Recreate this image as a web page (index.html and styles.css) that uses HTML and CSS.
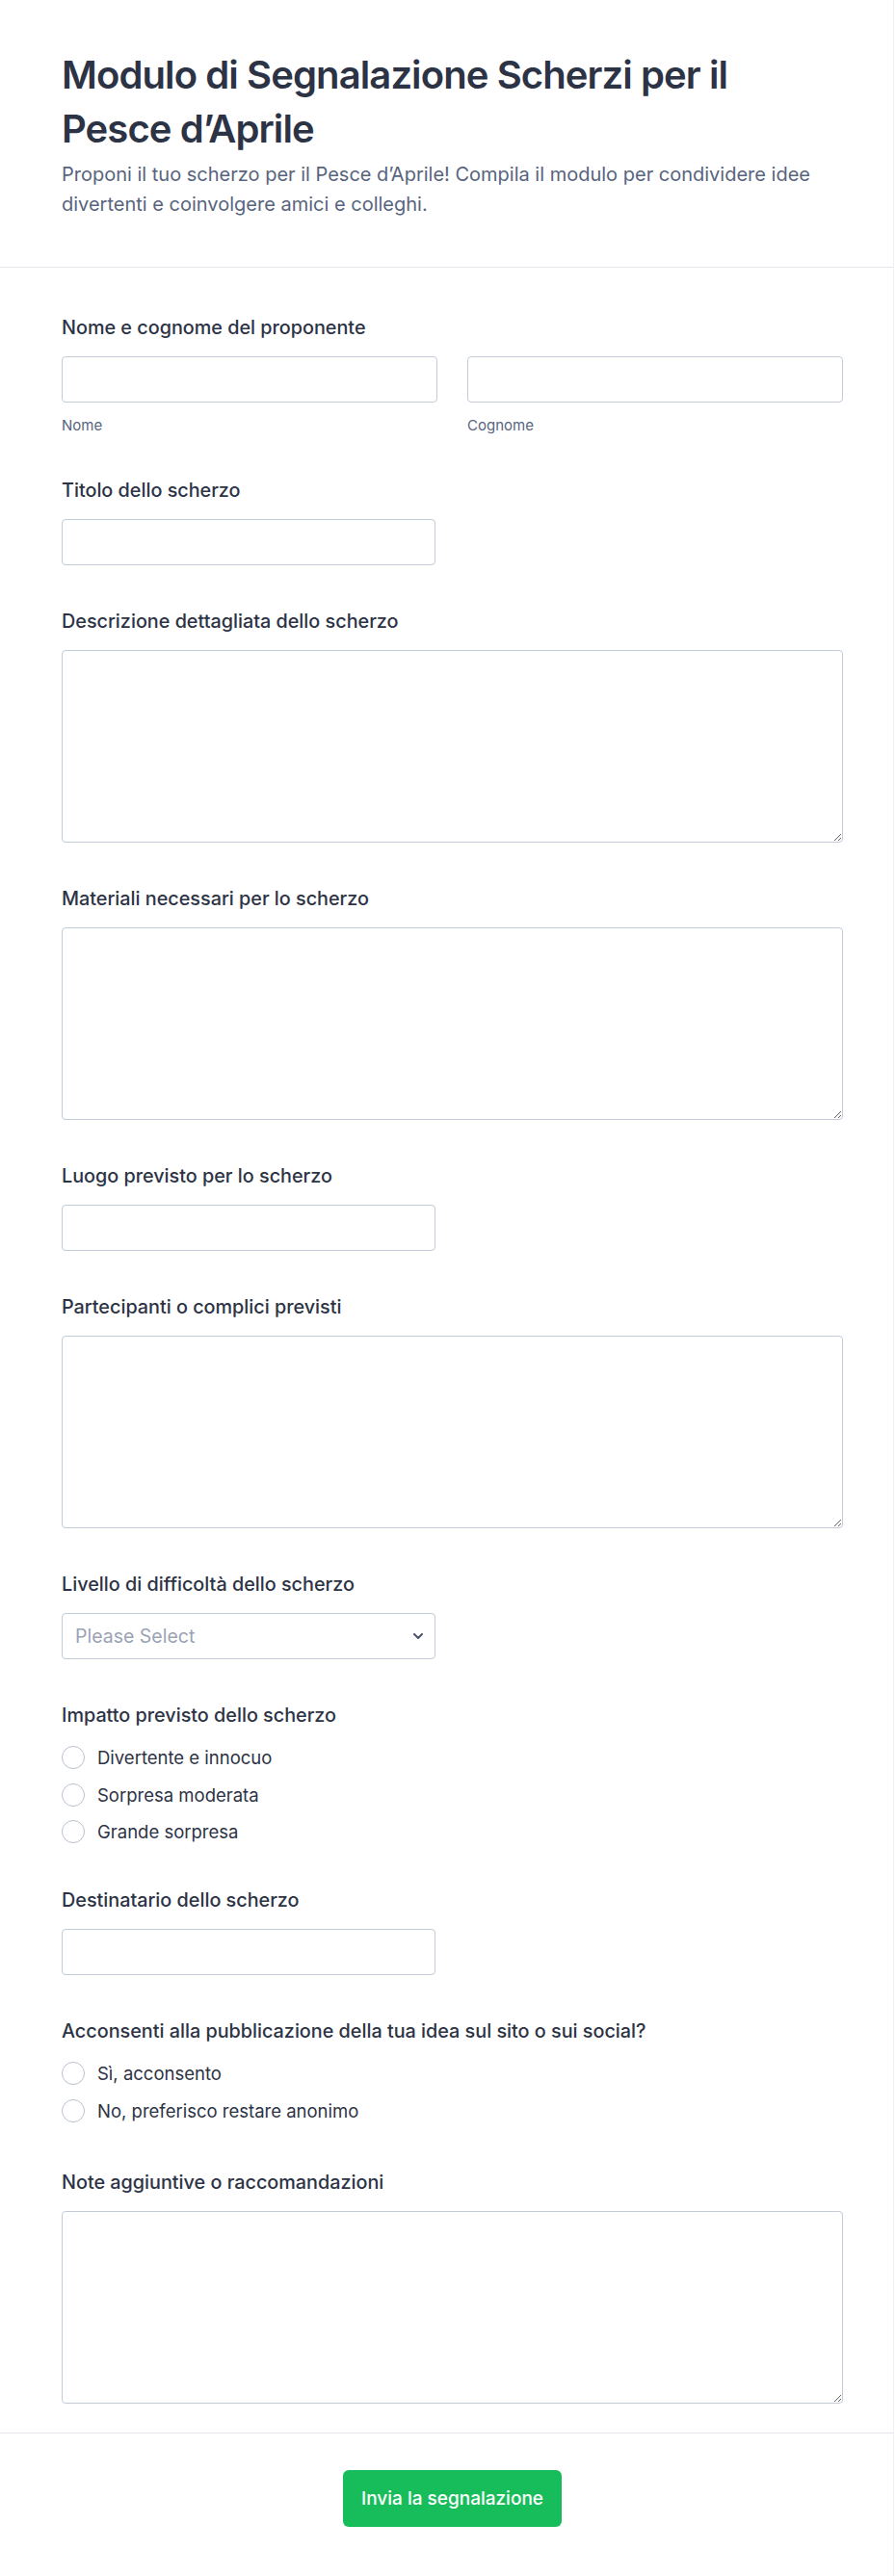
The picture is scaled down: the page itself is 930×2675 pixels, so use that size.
FILE: index.html
```html
<!DOCTYPE html>
<html lang="it">
<head>
	<meta charset="UTF-8">
	<title>Modulo di Segnalazione Scherzi per il Pesce d’Aprile</title>
	<link rel="stylesheet" href="styles.css">
</head>
<body>
	<div class="page">
		<div class="header">
			<h1 class="title">Modulo di Segnalazione Scherzi per il Pesce d’Aprile</h1>
			<p class="intro">Proponi il tuo scherzo per il Pesce d’Aprile! Compila il modulo per condividere idee divertenti e coinvolgere amici e colleghi.</p>
		</div>

		<form class="form">
			<div class="field">
				<label class="label">Nome e cognome del proponente</label>
				<div class="name-row">
					<div>
						<input class="input" type="text">
						<span class="sublabel">Nome</span>
					</div>
					<div>
						<input class="input" type="text">
						<span class="sublabel">Cognome</span>
					</div>
				</div>
			</div>

			<div class="field">
				<label class="label">Titolo dello scherzo</label>
				<input class="input half" type="text">
			</div>

			<div class="field">
				<label class="label">Descrizione dettagliata dello scherzo</label>
				<textarea class="textarea"></textarea>
			</div>

			<div class="field">
				<label class="label">Materiali necessari per lo scherzo</label>
				<textarea class="textarea"></textarea>
			</div>

			<div class="field">
				<label class="label">Luogo previsto per lo scherzo</label>
				<input class="input half" type="text">
			</div>

			<div class="field">
				<label class="label">Partecipanti o complici previsti</label>
				<textarea class="textarea"></textarea>
			</div>

			<div class="field">
				<label class="label">Livello di difficoltà dello scherzo</label>
				<div class="select-wrap half">
					<select class="select">
						<option>Please Select</option>
						<option>Facile</option>
						<option>Medio</option>
						<option>Difficile</option>
					</select>
					<svg class="chevron" width="10" height="6" viewBox="0 0 10 6"><path d="M1 1l4 4 4-4" fill="none" stroke="#4b5468" stroke-width="2" stroke-linecap="round" stroke-linejoin="round"/></svg>
				</div>
			</div>

			<div class="field">
				<label class="label radio-label">Impatto previsto dello scherzo</label>
				<div class="options">
					<label class="option"><input class="radio" type="radio" name="impatto"><span>Divertente e innocuo</span></label>
					<label class="option"><input class="radio" type="radio" name="impatto"><span>Sorpresa moderata</span></label>
					<label class="option"><input class="radio" type="radio" name="impatto"><span>Grande sorpresa</span></label>
				</div>
			</div>

			<div class="field">
				<label class="label">Destinatario dello scherzo</label>
				<input class="input half" type="text">
			</div>

			<div class="field">
				<label class="label radio-label">Acconsenti alla pubblicazione della tua idea sul sito o sui social?</label>
				<div class="options last">
					<label class="option"><input class="radio" type="radio" name="consenso"><span>Sì, acconsento</span></label>
					<label class="option"><input class="radio" type="radio" name="consenso"><span>No, preferisco restare anonimo</span></label>
				</div>
			</div>

			<div class="field">
				<label class="label">Note aggiuntive o raccomandazioni</label>
				<textarea class="textarea"></textarea>
			</div>
		</form>

		<div class="footer">
			<button class="submit" type="button">Invia la segnalazione</button>
		</div>
	</div>
</body>
</html>
```

FILE: styles.css
```css
*{ margin: 0; padding: 0; box-sizing: border-box; }
body{ background: #fff; font-family: Inter, "Noto Sans", sans-serif; color: #2c3345; }

.page{ width: 928px; min-height: 2675px; border-right: 1px solid #eef0f4; }

.header{ padding: 50px 52px 49px 64px; border-bottom: 1px solid #e3e8f0; }
.title{ font-size: 40px; line-height: 56px; font-weight: 600; color: #2c3345; letter-spacing: -0.9px; }
.intro{ margin-top: 4px; font-size: 20px; line-height: 31px; color: #57647e; }

.form{ padding: 50px 52px 30px 64px; display: flex; flex-direction: column; gap: 46px; border-bottom: 1px solid #e3e8f0; }
.field{ display: flex; flex-direction: column; }
.label{ display: block; font-size: 19.8px; line-height: 24px; font-weight: 500; color: #2c3345; margin-bottom: 18px; }
.radio-label{ margin-bottom: 19px; }

.name-row{ display: grid; grid-template-columns: 1fr 1fr; gap: 31px; }
.sublabel{ display: block; margin-top: 15px; font-size: 15px; line-height: 18px; color: #57647e; }

.input, .select, .textarea{ display: block; width: 100%; height: 48px; border: 1px solid #c3cad8; border-radius: 4px; background: #fff; font-family: inherit; font-size: 19.5px; color: #2c3345; outline: none; }
.input{ padding: 0 14px; }
.half{ width: 388px; }
.textarea{ height: 200px; padding: 10px 14px; resize: vertical; }

.select-wrap{ position: relative; }
.select{ appearance: none; -webkit-appearance: none; padding: 0 36px 0 13px; color: #9aa3b4; }
.chevron{ position: absolute; right: 13px; top: 21px; pointer-events: none; }

.options{ display: flex; flex-direction: column; gap: 12.5px; }
.options.last{ padding-bottom: 3px; }
.option{ display: flex; align-items: center; min-height: 26px; font-size: 18.5px; color: #2c3345; }
.radio{ appearance: none; -webkit-appearance: none; width: 24px; height: 24px; border: 1px solid #b9c1ce; border-radius: 50%; background: #fff; margin-right: 13px; flex-shrink: 0; }

.footer{ padding: 38px 52px 50px 64px; display: flex; justify-content: center; }
.submit{ height: 59px; padding: 0 16px; min-width: 227px; border: none; border-radius: 6px; background: #18bd5b; color: #fff; font-family: inherit; font-size: 19px; font-weight: 500; }
```
